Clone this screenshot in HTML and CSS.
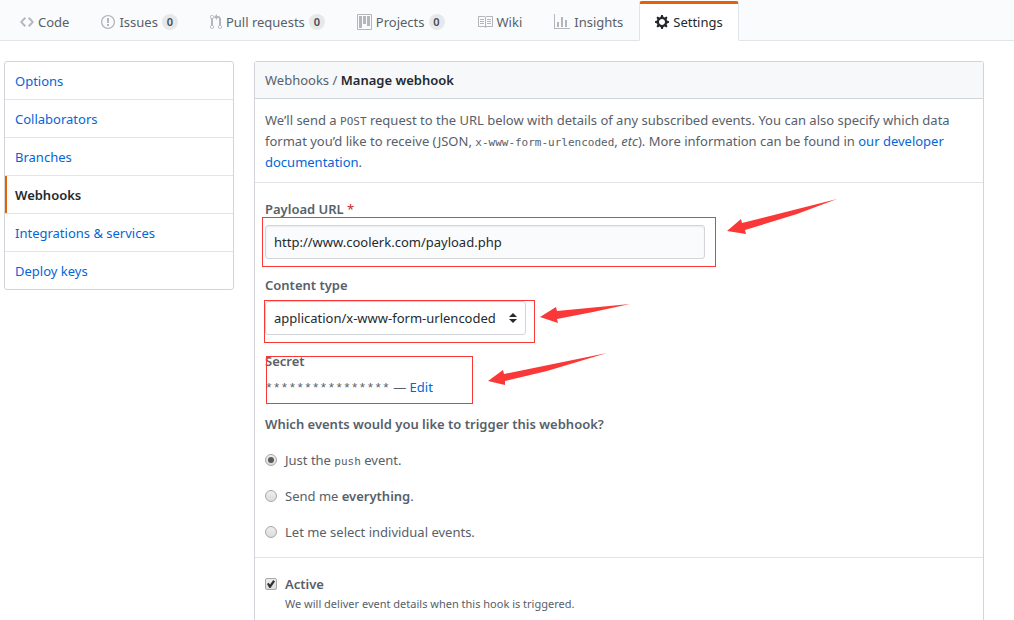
FILE: index.html
```html
<!DOCTYPE html>
<html lang="en">
<head>
<meta charset="utf-8">
<meta name="viewport" content="width=device-width, initial-scale=1">
<title>Webhooks · Manage webhook</title>
<link rel="stylesheet" href="styles.css">
</head>
<body>
<nav class="tabs" aria-label="Repository">
  <a class="tab" href="#code"><svg class="icon" width="14" height="16" viewBox="0 0 14 16"><path d="M9.5 3L8 4.500 11.500 8 8 11.500 9.500 13 14 8 9.500 3zm-5 0L0 8l4.500 5L6 11.500 2.500 8 6 4.500 4.500 3z"/></svg><span>Code</span></a>
  <a class="tab" href="#issues"><svg class="icon" width="14" height="16" viewBox="0 0 14 16"><path fill-rule="evenodd" d="M7 2.300c3.140 0 5.700 2.560 5.700 5.700s-2.560 5.700-5.700 5.700A5.710 5.710 0 0 1 1.300 8c0-3.140 2.560-5.700 5.700-5.700zM7 1C3.140 1 0 4.140 0 8s3.140 7 7 7 7-3.140 7-7-3.140-7-7-7zm1 3H6v5h2V4zm0 6H6v2h2v-2z"/></svg><span>Issues</span><span class="counter">0</span></a>
  <a class="tab" href="#pulls"><svg class="icon" width="12" height="16" viewBox="0 0 12 16"><path fill-rule="evenodd" d="M11 11.280V5c-.03-.78-.34-1.470-.94-2.060C9.460 2.350 8.780 2.030 8 2H7V0L4 3l3 3V4h1c.27.02.48.11.69.31.21.2.3.42.31.69v6.280A1.993 1.993 0 0 0 10 15a1.993 1.993 0 0 0 1-3.720zm-1 2.920c-.66 0-1.200-.55-1.200-1.200 0-.65.55-1.200 1.200-1.200.65 0 1.200.55 1.200 1.200 0 .65-.55 1.200-1.200 1.200zM4 3c0-1.110-.89-2-2-2a1.993 1.993 0 0 0-1 3.720v6.560A1.993 1.993 0 0 0 2 15a1.993 1.993 0 0 0 1-3.720V4.720c.59-.34 1-.98 1-1.720zm-.8 10c0 .66-.55 1.200-1.200 1.200-.65 0-1.200-.55-1.200-1.200 0-.65.55-1.200 1.200-1.200.65 0 1.200.55 1.200 1.200zM2 4.200C1.340 4.200.8 3.650.8 3c0-.65.55-1.200 1.200-1.200.65 0 1.200.55 1.200 1.200 0 .65-.55 1.200-1.200 1.200z"/></svg><span>Pull requests</span><span class="counter">0</span></a>
  <a class="tab" href="#projects"><svg class="icon" width="15" height="16" viewBox="0 0 15 16"><path fill-rule="evenodd" d="M10 12h3V2h-3v10zm-4-2h3V2H6v8zm-4 4h3V2H2v12zm-1 1h13V1H1v14zM14 0H1a1 1 0 0 0-1 1v14a1 1 0 0 0 1 1h13a1 1 0 0 0 1-1V1a1 1 0 0 0-1-1z"/></svg><span>Projects</span><span class="counter">0</span></a>
  <a class="tab" href="#wiki"><svg class="icon" width="16" height="16" viewBox="0 0 16 16"><path fill-rule="evenodd" d="M3 5h4v1H3V5zm0 3h4V7H3v1zm0 2h4V9H3v1zm11-5h-4v1h4V5zm0 2h-4v1h4V7zm0 2h-4v1h4V9zm2-6v9c0 .55-.45 1-1 1H9.500l-1 1-1-1H2c-.55 0-1-.45-1-1V3c0-.55.45-1 1-1h5.500l1 1 1-1H15c.55 0 1 .45 1 1zm-8 .5L7.500 3H2v9h6V3.500zm7-.5H9.500l-.5.5V12h6V3z"/></svg><span>Wiki</span></a>
  <a class="tab" href="#insights"><svg class="icon" width="16" height="16" viewBox="0 0 16 16"><path d="M16 14v1H0V0h1v14h15zM5 13H3V8h2v5zm4 0H7V3h2v10zm4 0h-2V6h2v7z"/></svg><span>Insights</span></a>
  <a class="tab tab-current" href="#settings" aria-current="page"><svg class="icon" width="14" height="16" viewBox="0 0 14 16"><path fill-rule="evenodd" d="M14 8.770v-1.600l-1.940-.64-.45-1.090.88-1.840-1.130-1.130-1.810.91-1.090-.45-.69-1.920h-1.600l-.63 1.940-1.110.45-1.840-.88-1.130 1.130.91 1.810-.45 1.090L0 7.230v1.590l1.940.64.45 1.090-.88 1.840 1.130 1.130 1.810-.91 1.090.45.69 1.920h1.590l.63-1.940 1.110-.45 1.840.88 1.130-1.130-.92-1.810.47-1.090L14 8.750v.02zM7 11c-1.660 0-3-1.340-3-3s1.340-3 3-3 3 1.340 3 3-1.340 3-3 3z"/></svg><span>Settings</span></a>
</nav>

<div class="layout">
  <nav class="menu" aria-label="Settings">
    <a class="menu-item" href="#options">Options</a>
    <a class="menu-item" href="#collaborators">Collaborators</a>
    <a class="menu-item" href="#branches">Branches</a>
    <a class="menu-item menu-item-current" href="#webhooks" aria-current="page">Webhooks</a>
    <a class="menu-item" href="#integrations">Integrations &amp; services</a>
    <a class="menu-item" href="#keys">Deploy keys</a>
  </nav>

  <main class="panel">
    <h1 class="panel-title"><a href="#hooks">Webhooks</a> / <strong>Manage webhook</strong></h1>
    <p class="intro">We’ll send a <code>POST</code> request to the URL below with details of any subscribed events. You can also specify which data format you’d like to receive (JSON, <code>x-www-form-urlencoded</code>, <em>etc</em>). More information can be found in <a class="link" href="#docs">our developer documentation</a>.</p>

    <form>
      <div class="section">
        <div class="field">
          <label class="label" for="url">Payload URL <span class="required">*</span></label>
          <div class="control control-url">
            <input class="text-input" id="url" type="text" value="http://www.coolerk.com/payload.php">
            <span class="mark mark-url"></span>
            <svg class="arrow arrow-url" width="112" height="36" viewBox="0 0 112 36"><path d="M0 32L14 20 15 24 110 0 70 15 18 31 19 35z"/></svg>
          </div>
        </div>
        <div class="field">
          <label class="label" for="type">Content type</label>
          <div class="control control-type">
            <select class="select" id="type"><option>application/x-www-form-urlencoded</option><option>application/json</option></select>
            <svg class="caret" width="8" height="10" viewBox="0 0 8 10"><path d="M4 0L8 4H0zM0 6H8L4 10z"/></svg>
            <span class="mark mark-type"></span>
            <svg class="arrow arrow-type" width="92" height="20" viewBox="0 0 92 20"><path d="M0 13L16 3 17 7 90 0 53 8 17 15 18 19z"/></svg>
          </div>
        </div>
        <div class="field field-secret">
          <span class="label">Secret</span>
          <div class="secret"><span class="stars">****************</span> — <a class="link" href="#edit">Edit</a></div>
          <span class="mark mark-secret"></span>
          <svg class="arrow arrow-secret" width="120" height="33" viewBox="0 0 120 33"><path d="M0 28L15 17 16 21 119 0 59 18 17 28 17 32z"/></svg>
        </div>
        <fieldset class="events">
          <legend class="label">Which events would you like to trigger this webhook?</legend>
          <label class="choice"><input class="radio" type="radio" name="events" checked><span>Just the <code>push</code> event.</span></label>
          <label class="choice"><input class="radio" type="radio" name="events"><span>Send me <strong>everything</strong>.</span></label>
          <label class="choice"><input class="radio" type="radio" name="events"><span>Let me select individual events.</span></label>
        </fieldset>
      </div>
      <div class="section section-active">
        <label class="choice"><input class="checkbox" type="checkbox" checked aria-describedby="active-note"><strong>Active</strong></label>
        <p class="note" id="active-note">We will deliver event details when this hook is triggered.</p>
      </div>
    </form>
  </main>
</div>
</body>
</html>
```
FILE: styles.css
```css
* {
  box-sizing: border-box;
}

body {
  display: flex;
  flex-direction: column;
  min-height: 100vh;
  margin: 0;
  background: #fff;
  color: #586069;
  font-family: "Noto Sans", "Open Sans", sans-serif;
  font-size: 13px;
  line-height: 20px;
}

a {
  color: inherit;
  text-decoration: none;
}

strong {
  font-weight: 600;
}

code {
  font-family: "DejaVu Sans Mono", monospace;
  font-size: 11px;
  line-height: 1;
}

.link {
  color: #0366d6;
}

/* Repository tabs */
.tabs {
  display: flex;
  padding: 1px 4px 0;
  background: #fafbfc;
  border-bottom: 1px solid #e1e4e8;
}

.tab {
  display: flex;
  align-items: center;
  gap: 4px;
  height: 40px;
  margin-bottom: -1px;
  padding: 0 15px;
  border: 1px solid transparent;
  border-top: 3px solid transparent;
  border-radius: 3px 3px 0 0;
  white-space: nowrap;
}

.icon {
  flex: none;
  fill: #b4b7ba;
}

.counter {
  width: 16px;
  border-radius: 20px;
  background: #e7e8ea;
  color: #444d56;
  font-size: 11px;
  font-weight: 600;
  line-height: 16px;
  text-align: center;
}

.tab-current {
  border-color: #e36209 #e1e4e8 transparent;
  background: #fff;
  color: #24292e;
}

.tab-current .icon {
  fill: #24292e;
}

/* Page columns */
.layout {
  display: flex;
  flex: 1;
  gap: 20px;
  padding: 20px 30px 0 4px;
}

.menu {
  flex: 0 0 230px;
  align-self: flex-start;
  border: 1px solid #d1d5da;
  border-radius: 3px;
}

.menu-item {
  display: block;
  padding: 9px 10px 8px;
  border-bottom: 1px solid #e1e4e8;
  color: #0366d6;
}

.menu-item:last-child {
  border-bottom: 0;
}

.menu-item-current {
  box-shadow: inset 2px 0 #e36209;
  color: #24292e;
  font-weight: 600;
}

.panel {
  flex: 1;
  min-width: 0;
  border: 1px solid #d1d5da;
  border-bottom: 0;
  border-radius: 3px 3px 0 0;
}

.panel-title {
  margin: 0;
  padding: 8px 10px;
  border-bottom: 1px solid #d1d5da;
  background: #f6f8fa;
  font-size: 13px;
  font-weight: 400;
}

.panel-title strong {
  color: #24292e;
}

.intro {
  margin: 0;
  padding: 11px 10px 9px;
  border-bottom: 1px solid #e1e4e8;
  line-height: 21px;
}

/* Form */
.section {
  display: flex;
  flex-direction: column;
  gap: 16px;
  padding: 16px 10px 15px;
}

.section-active {
  gap: 0;
  padding-bottom: 0;
  border-top: 1px solid #e1e4e8;
}

.field {
  display: flex;
  flex-direction: column;
  align-items: flex-start;
  gap: 6px;
}

.field-secret {
  position: relative;
}

.label {
  padding: 0;
  font-weight: 600;
}

.required {
  color: #cb2431;
  font-weight: 400;
}

.control {
  position: relative;
  max-width: 100%;
}

.control-url {
  width: 440px;
}

.control-type {
  width: 261px;
}

.text-input,
.select {
  display: block;
  width: 100%;
  height: 34px;
  margin: 0;
  padding: 0 8px;
  border: 1px solid #d1d5da;
  border-radius: 3px;
  color: #24292e;
  font: inherit;
  appearance: none;
}

.text-input {
  background: #fafbfc;
  box-shadow: inset 0 1px 2px rgba(27, 31, 35, 0.07);
}

.select {
  background: #fff;
}

.caret {
  position: absolute;
  top: 12px;
  right: 9px;
  fill: #24292e;
  pointer-events: none;
}

.secret {
  line-height: 21px;
}

.stars {
  font-family: "Liberation Mono", monospace;
  line-height: 1;
}

.events {
  display: flex;
  flex-direction: column;
  gap: 16px;
  margin: 0;
  padding: 0;
  border: 0;
}

.events legend {
  margin-bottom: 16px;
}

.choice {
  display: flex;
  align-items: center;
  gap: 8px;
}

.radio,
.checkbox {
  display: grid;
  place-items: center;
  flex: none;
  width: 12px;
  height: 12px;
  margin: 0;
  border: 1px solid #a8a8a8;
  background: linear-gradient(#eee, #dcdcdc);
  appearance: none;
}

.radio {
  border-radius: 50%;
}

.checkbox {
  border-radius: 2px;
}

.radio:checked::before {
  width: 6px;
  height: 6px;
  border-radius: 50%;
  background: #5a5a5a;
  content: "";
}

.checkbox:checked::before {
  width: 8px;
  height: 8px;
  background: #333;
  clip-path: polygon(0 50%, 20% 34%, 38% 56%, 78% 0, 100% 18%, 44% 100%, 30% 100%);
  content: "";
}

.note {
  margin: 0;
  padding-left: 20px;
  font-size: 11px;
}

/* Red annotations */
.mark {
  position: absolute;
  border: 1px solid #fb3838;
  pointer-events: none;
}

.mark-url {
  inset: -8px -11px -8px -3px;
}

.mark-type {
  inset: -1px -9px -8px -1px;
}

.mark-secret {
  top: 5px;
  bottom: -6px;
  left: 1px;
  width: 207px;
}

.arrow {
  position: absolute;
  fill: #fb3838;
  pointer-events: none;
}

.arrow-url {
  top: -26px;
  left: 462px;
}

.arrow-type {
  top: 3px;
  left: 275px;
}

.arrow-secret {
  top: 2px;
  left: 223px;
}
```
